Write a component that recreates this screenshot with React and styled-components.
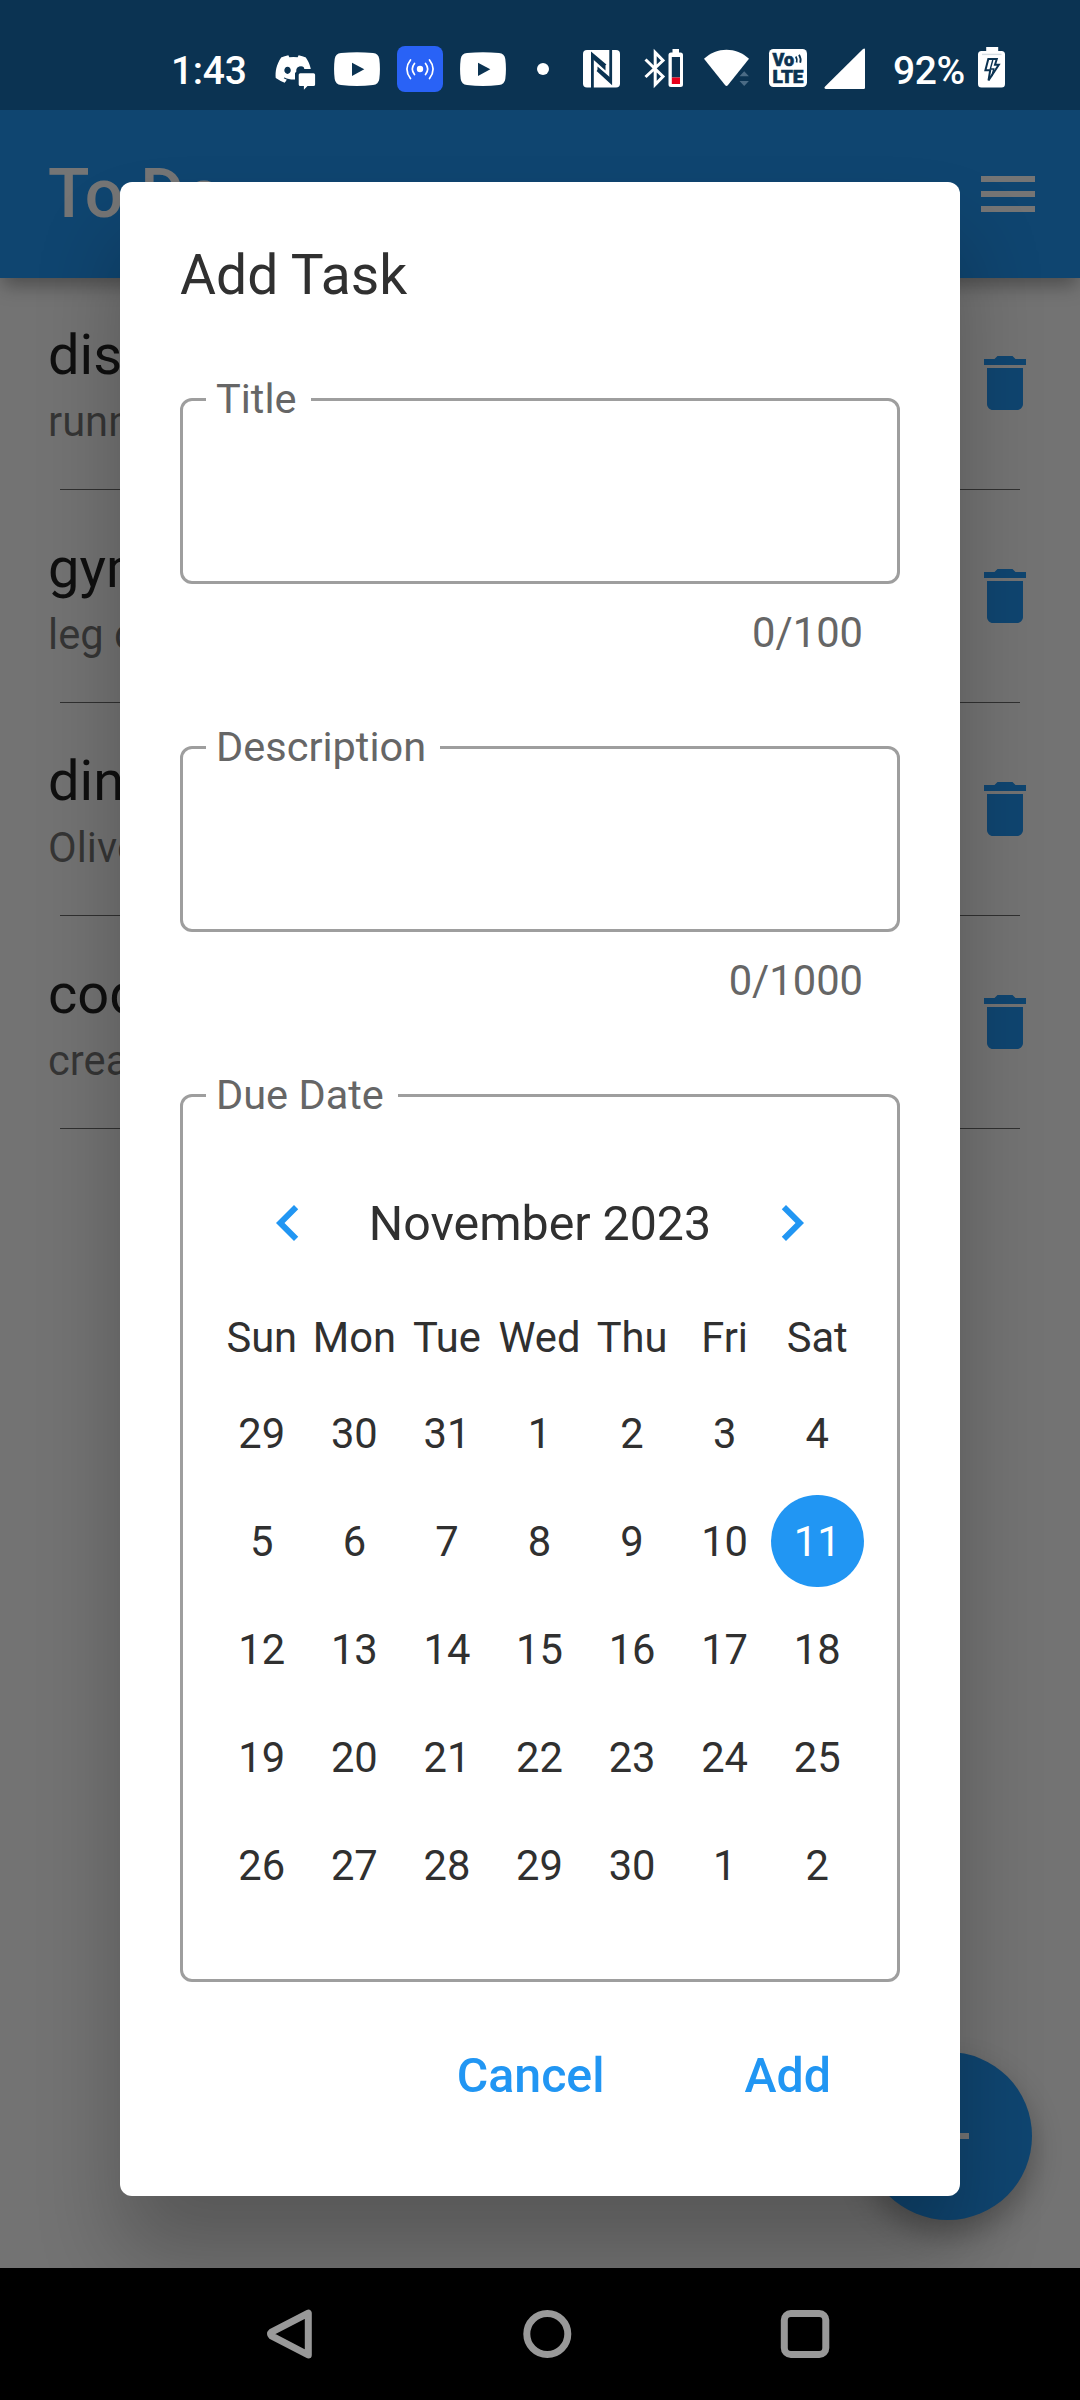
import React from "react";
import styled, { createGlobalStyle } from "styled-components";
import { FaDiscord } from "react-icons/fa6";

const BLUE = "#2196f3";
const STATUS = "#0b3352";

const GlobalStyle = createGlobalStyle`
  html, body { margin: 0; padding: 0; background: #000; }
  * { box-sizing: border-box; }
  body { font-family: Roboto, "Liberation Sans", sans-serif; }
  button { font: inherit; border: 0; background: none; padding: 0; margin: 0; }
  svg { display: block; flex: none; }
`;

const Phone = styled.div`
  width: 1080px;
  height: 2400px;
  display: flex;
  flex-direction: column;
  overflow: hidden;
`;

/* Status bar */
const StatusBar = styled.header`
  height: 110px;
  flex: none;
  display: flex;
  align-items: center;
  padding: 28px 0 0 171px;
  background: ${STATUS};
  color: #fff;
  font-size: 39px;
  line-height: 46px;
  font-weight: 500;
`;
const Clock = styled.span`
  width: 100px;
  padding-top: 3px;
  letter-spacing: -0.3px;
`;
const Notifications = styled.div`
  display: flex;
  gap: 17px;
`;
const System = styled.div`
  display: flex;
`;
const Percent = styled.span`
  width: 92px;
  padding: 3px 0 0 13px;
  letter-spacing: -0.4px;
`;

/* App */
const AppArea = styled.main`
  position: relative;
  flex: none;
  height: 2158px;
  background: #fafafa;
  overflow: hidden;
`;
const AppBar = styled.div`
  position: relative;
  z-index: 1;
  height: 168px;
  padding: 0 36px 0 48px;
  display: flex;
  align-items: center;
  justify-content: space-between;
  background: ${BLUE};
  color: #fff;
  box-shadow: 0 10px 18px -3px rgba(0, 0, 0, 0.34);
`;
const AppTitle = styled.h1`
  margin: 0;
  font-size: 68px;
  line-height: 80px;
  font-weight: 500;
`;
const TaskList = styled.ul`
  list-style: none;
  margin: -1px 0 0;
  padding: 0;
`;
const Task = styled.li`
  height: 213px;
  display: flex;
  flex-direction: column;
  justify-content: space-between;
`;
const TaskBody = styled.div`
  display: flex;
  justify-content: space-between;
  padding: 45px 39px 0 48px;
`;
const TaskText = styled.div`
  display: flex;
  flex-direction: column;
`;
const TaskTitle = styled.span`
  font-size: 56px;
  line-height: 66px;
  color: rgba(0, 0, 0, 0.87);
`;
const TaskNote = styled.span`
  font-size: 41.7px;
  line-height: 68px;
  color: rgba(0, 0, 0, 0.54);
`;
const DeleteButton = styled.button`
  height: 72px;
  margin-top: 25px;
  color: ${BLUE};
`;
const Divider = styled.div`
  height: 1px;
  margin: 0 60px;
  background: #6a6a6a;
`;
const Fab = styled.button`
  position: absolute;
  right: 48px;
  bottom: 48px;
  width: 168px;
  height: 168px;
  border-radius: 50%;
  display: grid;
  place-items: center;
  background: ${BLUE};
  color: #fff;
  box-shadow: 0 14px 30px rgba(0, 0, 0, 0.3);
`;

/* Dialog */
const Scrim = styled.div`
  position: absolute;
  inset: 0;
  z-index: 2;
  display: flex;
  align-items: center;
  justify-content: center;
  background: rgba(0, 0, 0, 0.54);
`;
const Dialog = styled.section`
  width: 840px;
  height: 2014px;
  padding: 60px;
  border-radius: 12px;
  background: #fff;
  color: #303030;
  box-shadow: 0 58px 84px rgba(0, 0, 0, 0.24);
`;
const DialogTitle = styled.h2`
  margin: 0;
  height: 67px;
  font-size: 55.2px;
  line-height: 66px;
  font-weight: 400;
`;
const Field = styled.fieldset`
  height: ${(p) => p.$height}px;
  min-width: 0;
  margin: 67px 0 0;
  padding: 0 23px;
  border: 3px solid #9e9e9e;
  border-radius: 12px;
`;
const Label = styled.legend`
  height: 47px;
  padding: 0 14px 2px 10px;
  font-size: 41.5px;
  line-height: 46px;
  color: #666;
`;
const Counter = styled.div`
  margin-top: 24px;
  padding-right: 37px;
  text-align: right;
  font-size: 41.7px;
  line-height: 49px;
  color: #666;
`;
const Calendar = styled.div`
  margin: 68px 10px 0;
`;
const MonthRow = styled.div`
  height: 72px;
  padding: 0 36px;
  display: flex;
  align-items: center;
  justify-content: space-between;
  font-size: 48.3px;
  line-height: 73px;
`;
const MonthButton = styled.button`
  color: ${BLUE};
`;
const Week = styled.div`
  display: grid;
  grid-template-columns: repeat(7, 1fr);
  justify-items: center;
  font-size: 41.7px;
`;
const Weekdays = styled(Week)`
  margin: 54px 0 17px;
  line-height: 49px;
  white-space: nowrap;

  span {
    padding-right: 1px;
  }
`;
const Days = styled(Week)`
  grid-auto-rows: 108px;
  align-items: center;
`;
const Day = styled.span`
  width: 92.57px;
  height: 92.57px;
  padding-right: 1px;
  line-height: 94px;
  text-align: center;
  border-radius: 50%;
  background: ${(p) => (p.$selected ? BLUE : "transparent")};
  color: ${(p) => (p.$selected ? "#fff" : "inherit")};
`;
const Actions = styled.div`
  display: flex;
  justify-content: flex-end;
  gap: 140px;
  margin-top: 58px;
  padding-right: 69px;
`;
const Action = styled.button`
  height: 72px;
  font-size: 48.3px;
  line-height: 72px;
  font-weight: 500;
  color: ${BLUE};
`;

/* System navigation */
const NavBar = styled.footer`
  height: 132px;
  flex: none;
  display: flex;
  align-items: center;
  justify-content: space-between;
  padding: 0 245px 0 260px;
  background: #000;
  color: #999;
`;

const Slot = ({ x, w, children }) => (
  <svg width={w} height="46" viewBox={`${x} 46 ${w} 46`} fill="#fff">
    {children}
  </svg>
);

const MaterialIcon = ({ d }) => (
  <svg width="72" height="72" viewBox="0 0 24 24" fill="currentColor">
    <path d={d} />
  </svg>
);

const Chat = () => (
  <Slot x={271} w={46}>
    <FaDiscord x="274" y="49.5" width="39" height="38" color="#fff" />
    <path d="M297 71q2-2 5-2h17v24h-24V73z" fill={STATUS} />
    <circle cx="301" cy="69.5" r="3.3" fill={STATUS} />
    <path d="M300.300 73.200h13.200a1.600 1.600 0 0 1 1.600 1.600v9.600a1.600 1.600 0 0 1-1.600 1.600h-6l-3.600 3.800v-3.800h-3.600a1.600 1.600 0 0 1-1.600-1.600v-9.600a1.600 1.600 0 0 1 1.600-1.600z" />
  </Slot>
);

const Video = ({ x }) => (
  <Slot x={x} w={46}>
    <g transform={`translate(${x} 52)`}>
      <path d="M7 1Q23-.4 39 1Q44.500 1.500 45.300 7Q46.600 17 45.300 27Q44.500 32.500 39 33Q23 34.800 7 33Q1.500 32.500 .7 27Q-.6 17 .7 7Q1.500 1.500 7 1z" />
      <path d="M18 10.700v13.300L30.300 17.300z" fill={STATUS} />
    </g>
  </Slot>
);

const Broadcast = () => (
  <Slot x={397} w={46}>
    <rect x="397" y="46" width="46" height="46" rx="8" fill="#2962f6" />
    <circle cx="420" cy="69" r="3.200" />
    <g fill="none" stroke="#fff" strokeWidth="1.700" strokeLinecap="round">
      <path d="M414.500 63.500q-4.400 5.500 0 11M425.500 63.500q4.400 5.500 0 11" />
      <path d="M410.500 60q-7.200 9 0 18.500M429.500 60q7.200 9 0 18.500" />
    </g>
  </Slot>
);

const Nfc = () => (
  <Slot x={572} w={60}>
    <rect x="583" y="51" width="37" height="37.500" rx="4" />
    <g fill="none" stroke={STATUS} strokeWidth="2.800">
      <path d="M592.400 89V55.500L605.500 66.500" />
      <path d="M610.700 51V83L597.500 71" />
    </g>
    <path d="M591 54.500l14.500 12.500v4.500L591 58.500zM597.500 67.500L612 80v4.500L597.500 71.500z" fill={STATUS} />
  </Slot>
);

const Bluetooth = () => (
  <Slot x={632} w={62}>
    <path
      d="M645.500 60.500L663 77.500L655.200 85.500V53.500L663 61.500L645.500 78"
      fill="none"
      stroke="#fff"
      strokeWidth="3"
    />
    <path d="M672.500 50h6.500v3.500h1.500a2.500 2.500 0 0 1 2.500 2.500v29.500a2.500 2.500 0 0 1-2.500 2.500h-9.500a2.500 2.500 0 0 1-2.500-2.500V56a2.500 2.500 0 0 1 2.500-2.500h1.500z" />
    <rect x="671.800" y="58" width="8.200" height="20.500" fill={STATUS} />
    <rect x="671.800" y="78.500" width="8.200" height="6.500" fill="#e8001c" />
  </Slot>
);

const Wifi = () => (
  <Slot x={694} w={65}>
    <path d="M704 59.800C717 47.800 736 47.800 749 59.800L728 86Q726.500 87.800 725 86z" />
    <path d="M739.500 77.200l4.700-4.900 4.700 4.900zM739.500 82l4.700 4.900 4.700-4.900z" fill="#4b6b85" />
  </Slot>
);

const VolteText = styled.text`
  font-family: Roboto, "Liberation Sans", sans-serif;
  font-weight: 900;
  fill: ${STATUS};
  stroke: ${STATUS};
  stroke-width: 0.6px;
`;

const Volte = () => (
  <Slot x={759} w={56}>
    <rect x="769" y="50" width="38" height="38" rx="4.500" />
    <VolteText x="772.500" y="67.300" fontSize="18" textLength="21.500" lengthAdjust="spacingAndGlyphs">Vo</VolteText>
    <VolteText x="772.500" y="84" fontSize="18.500" textLength="31" lengthAdjust="spacingAndGlyphs">LTE</VolteText>
    <path
      d="M795.800 57.500q1.600 2.700 .8 6M799 55.800q2.500 4 1.200 8"
      fill="none"
      stroke={STATUS}
      strokeWidth="1.800"
    />
  </Slot>
);

const Signal = () => (
  <Slot x={815} w={65}>
    <path d="M865 50.500V88.800q0 1.200-1.200 1.200H825.700q-2.200-.6-.6-2.500L863 50q2-1.300 2 .5z" />
  </Slot>
);

const Battery = () => (
  <Slot x={972} w={40}>
    <path d="M986.200 48h12v4h3.300a3.500 3.500 0 0 1 3.500 3.500v29.500a3.500 3.500 0 0 1-3.500 3.500h-20a3.500 3.500 0 0 1-3.500-3.500V55.500a3.500 3.500 0 0 1 3.500-3.500h4.700z" />
    <path d="M982 55.400h19.500" stroke="#d5dde3" strokeWidth="1.400" />
    <path
      d="M988.300 60h8.500l-1.800 5.800h3.800l-10.300 15.700 1.700-10.300h-4.800z"
      fill="none"
      stroke={STATUS}
      strokeWidth="2"
    />
    <path d="M992.800 61l-2.500 9h3.500l-2 7" fill="none" stroke={STATUS} strokeWidth="1.400" />
  </Slot>
);

const tasks = [
  ["dishes", "running low"],
  ["gym", "leg day"],
  ["dinner", "Olive Garden"],
  ["code", "create app"],
];
const weekdays = ["Sun", "Mon", "Tue", "Wed", "Thu", "Fri", "Sat"];
const days = [29, 30, 31, ...Array.from({ length: 30 }, (_, i) => i + 1), 1, 2];

export default function App() {
  return (
    <Phone>
      <GlobalStyle />
      <StatusBar>
        <Clock>1:43</Clock>
        <Notifications>
          <Chat />
          <Video x={334} />
          <Broadcast />
          <Video x={460} />
        </Notifications>
        <Slot x={506} w={66}>
          <circle cx="543" cy="69" r="6" />
        </Slot>
        <System>
          <Nfc />
          <Bluetooth />
          <Wifi />
          <Volte />
          <Signal />
          <Percent>92%</Percent>
          <Battery />
        </System>
      </StatusBar>

      <AppArea>
        <AppBar>
          <AppTitle>To Do</AppTitle>
          <MaterialIcon d="M3 18h18v-2H3v2zm0-5h18v-2H3v2zm0-7v2h18V6H3z" />
        </AppBar>
        <TaskList>
          {tasks.map(([title, note]) => (
            <Task key={title}>
              <TaskBody>
                <TaskText>
                  <TaskTitle>{title}</TaskTitle>
                  <TaskNote>{note}</TaskNote>
                </TaskText>
                <DeleteButton>
                  <MaterialIcon d="M6 19c0 1.100.9 2 2 2h8c1.100 0 2-.9 2-2V7H6v12zM19 4h-3.500l-1-1h-5l-1 1H5v2h14V4z" />
                </DeleteButton>
              </TaskBody>
              <Divider />
            </Task>
          ))}
        </TaskList>
        <Fab>
          <MaterialIcon d="M19 13h-6v6h-2v-6H5v-2h6V5h2v6h6v2z" />
        </Fab>

        <Scrim>
          <Dialog>
            <DialogTitle>Add Task</DialogTitle>
            <Field $height={208}>
              <Label>Title</Label>
            </Field>
            <Counter>0/100</Counter>
            <Field $height={208}>
              <Label>Description</Label>
            </Field>
            <Counter>0/1000</Counter>
            <Field $height={910}>
              <Label>Due Date</Label>
              <Calendar>
                <MonthRow>
                  <MonthButton>
                    <MaterialIcon d="M15.410 7.410L14 6l-6 6 6 6 1.410-1.410L10.830 12z" />
                  </MonthButton>
                  <span>November 2023</span>
                  <MonthButton>
                    <MaterialIcon d="M10 6L8.590 7.410 13.170 12l-4.580 4.590L10 18l6-6z" />
                  </MonthButton>
                </MonthRow>
                <Weekdays>
                  {weekdays.map((name) => (
                    <span key={name}>{name}</span>
                  ))}
                </Weekdays>
                <Days>
                  {days.map((day, i) => (
                    <Day key={i} $selected={i === 13}>
                      {day}
                    </Day>
                  ))}
                </Days>
              </Calendar>
            </Field>
            <Actions>
              <Action>Cancel</Action>
              <Action>Add</Action>
            </Actions>
          </Dialog>
        </Scrim>
      </AppArea>

      <NavBar>
        <svg width="60" height="60" viewBox="0 0 60 60" fill="none" stroke="currentColor" strokeWidth="7" strokeLinejoin="round">
          <path d="M48.300 9.200V51L11.500 31.800Q9.500 30 11.500 28.200z" />
        </svg>
        <svg width="60" height="60" viewBox="0 0 60 60" fill="none" stroke="currentColor" strokeWidth="7">
          <circle cx="29.300" cy="30" r="20.500" />
        </svg>
        <svg width="60" height="60" viewBox="0 0 60 60" fill="none" stroke="currentColor" strokeWidth="7">
          <rect x="9.300" y="9.500" width="41.500" height="41" rx="6.500" />
        </svg>
      </NavBar>
    </Phone>
  );
}
